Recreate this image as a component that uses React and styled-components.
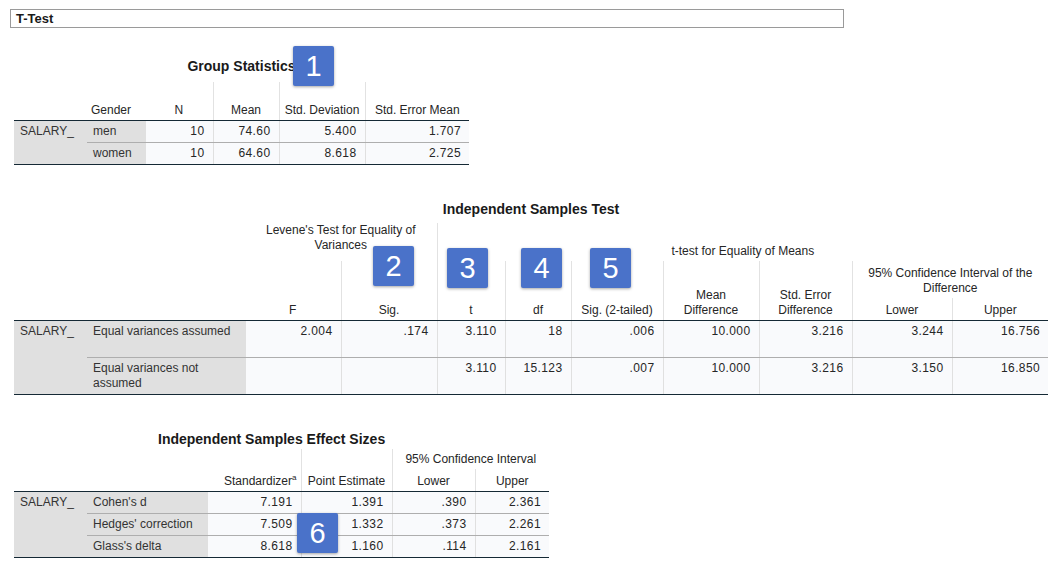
import React from "react";
import styled, { createGlobalStyle } from "styled-components";

const Global = createGlobalStyle`
  body { margin: 0; background: #fff; font-family: "Liberation Sans", Arial, sans-serif; color: #1a1a1a; }
`;

const Page = styled.div`
  position: relative;
  width: 1048px;
  height: 565px;
  padding: 9px 0 0 0;
  box-sizing: border-box;
`;

const Heading = styled.div`
  margin-left: 10px;
  width: 827px;
  height: 17px;
  border: 1px solid #9a9a9a;
  font-weight: bold;
  font-size: 13px;
  line-height: 17px;
  padding-left: 5px;
  box-sizing: content-box;
`;

const Block = styled.div`
  margin-left: 14px;
  margin-top: ${(p) => p.$top}px;
  width: ${(p) => p.$w}px;
`;

const Title = styled.div`
  text-align: center;
  font-weight: bold;
  font-size: 14px;
  height: 16px;
  line-height: 16px;
  margin-bottom: ${(p) => p.$gap}px;
  padding-left: ${(p) => p.$shift || 0}px;
`;

const Table = styled.table`
  border-collapse: collapse;
  table-layout: fixed;
  width: 100%;
  font-size: 12px;
  color: #262626;
`;

const Th = styled.th`
  font-weight: normal;
  text-align: center;
  vertical-align: bottom;
  padding: 0 4px 2px;
  line-height: 15px;
  height: ${(p) => p.$h || "auto"};
  border-left: ${(p) => (p.$noLine ? "none" : "1px solid #e2e2e2")};
  border-bottom: ${(p) => (p.$last ? "1px solid #152935" : "none")};
  text-align: ${(p) => p.$align || "center"};
  white-space: ${(p) => (p.$nowrap ? "nowrap" : "normal")};
  vertical-align: ${(p) => p.$valign || "bottom"};
`;

const Label = styled.td`
  background: #e0e0e0;
  padding: 3px 6px;
  vertical-align: top;
  line-height: 15px;
  border-bottom: 1px solid #152935;
  border-top: 1px solid #152935;
  color: #333;
`;

const Sub = styled.td`
  background: #e0e0e0;
  padding: 3px 6px;
  vertical-align: top;
  line-height: 15px;
  height: ${(p) => p.$h}px;
  border-top: 1px solid ${(p) => (p.$first ? "#152935" : "#aeaeae")};
  border-bottom: 1px solid ${(p) => (p.$lastRow ? "#152935" : "#aeaeae")};
  color: #333;
`;

const Num = styled.td`
  background: #f9fafc;
  text-align: right;
  padding: 3px 8px;
  vertical-align: top;
  line-height: 15px;
  letter-spacing: 0.4px;
  border-left: 1px solid #e0e0e0;
  border-top: 1px solid ${(p) => (p.$first ? "#152935" : "#aeaeae")};
  border-bottom: 1px solid ${(p) => (p.$lastRow ? "#152935" : "#aeaeae")};
`;

const Badge = styled.div`
  position: absolute;
  left: ${(p) => p.$x}px;
  top: ${(p) => p.$y}px;
  width: 41px;
  height: 40px;
  background: #4a72c9;
  color: #fff;
  font-size: 29px;
  display: flex;
  align-items: center;
  justify-content: center;
  border-radius: 2px;
  box-shadow: 0 1px 3px rgba(0,0,0,0.35);
`;

const Sup = styled.sup`
  font-size: 8px;
`;

const groupRows = [
  ["men", "10", "74.60", "5.400", "1.707"],
  ["women", "10", "64.60", "8.618", "2.725"],
];

const indRows = [
  ["Equal variances assumed", "2.004", ".174", "3.110", "18", ".006", "10.000", "3.216", "3.244", "16.756"],
  ["Equal variances not assumed", "", "", "3.110", "15.123", ".007", "10.000", "3.216", "3.150", "16.850"],
];

const effRows = [
  ["Cohen's d", "7.191", "1.391", ".390", "2.361"],
  ["Hedges' correction", "7.509", "1.332", ".373", "2.261"],
  ["Glass's delta", "8.618", "1.160", ".114", "2.161"],
];

function Cols({ widths }) {
  return (
    <colgroup>
      {widths.map((w, i) => (
        <col key={i} style={{ width: w }} />
      ))}
    </colgroup>
  );
}

export default function App() {
  return (
    <>
      <Global />
      <Page>
        <Heading>T-Test</Heading>

        <Block $top={30} $w={455}>
          <Title $gap={8} $shift={0}>Group Statistics</Title>
          <Table>
            <Cols widths={[73, 58, 68, 66, 86, 104]} />
            <thead>
              <tr>
                <Th $noLine $last $h="36px" />
                <Th $noLine $last $align="left">Gender</Th>
                <Th $noLine $last>N</Th>
                <Th $last>Mean</Th>
                <Th $last>Std. Deviation</Th>
                <Th $last>Std. Error Mean</Th>
              </tr>
            </thead>
            <tbody>
              {groupRows.map((r, i) => (
                <tr key={i}>
                  {i === 0 && <Label rowSpan={2}>SALARY_</Label>}
                  <Sub $h={15} $first={i === 0} $lastRow={i === 1}>{r[0]}</Sub>
                  {r.slice(1).map((v, j) => (
                    <Num key={j} $first={i === 0} $lastRow={i === 1}>{v}</Num>
                  ))}
                </tr>
              ))}
            </tbody>
          </Table>
        </Block>

        <Block $top={36} $w={1034}>
          <Title $gap={6}>Independent Samples Test</Title>
          <Table>
            <Cols widths={[73, 158, 96, 96, 68, 66, 92, 96, 93, 100, 96]} />
            <thead>
              <tr>
                <Th $noLine $last colSpan={2} rowSpan={3} />
                <Th $noLine colSpan={2} $h="36px" $valign="top">Levene's Test for Equality of Variances</Th>
                <Th colSpan={7} $valign="bottom">t-test for Equality of Means</Th>
              </tr>
              <tr>
                <Th $noLine $last rowSpan={2}>F</Th>
                <Th $last rowSpan={2}>Sig.</Th>
                <Th $last rowSpan={2}>t</Th>
                <Th $last rowSpan={2}>df</Th>
                <Th $last rowSpan={2}>Sig. (2-tailed)</Th>
                <Th $last rowSpan={2}>Mean Difference</Th>
                <Th $last rowSpan={2}>Std. Error Difference</Th>
                <Th colSpan={2} $h="35px">95% Confidence Interval of the Difference</Th>
              </tr>
              <tr>
                <Th $last $h="20px">Lower</Th>
                <Th $last>Upper</Th>
              </tr>
            </thead>
            <tbody>
              {indRows.map((r, i) => (
                <tr key={i}>
                  {i === 0 && <Label rowSpan={2}>SALARY_</Label>}
                  <Sub $h={30} $first={i === 0} $lastRow={i === 1}>{r[0]}</Sub>
                  {r.slice(1).map((v, j) => (
                    <Num key={j} $first={i === 0} $lastRow={i === 1}>{v}</Num>
                  ))}
                </tr>
              ))}
            </tbody>
          </Table>
        </Block>

        <Block $top={36} $w={535}>
          <Title $gap={2} style={{ textAlign: "left", paddingLeft: 144 }}>Independent Samples Effect Sizes</Title>
          <Table>
            <Cols widths={[73, 120, 94, 91, 83, 74]} />
            <thead>
              <tr>
                <Th $noLine $last colSpan={2} rowSpan={2} />
                <Th $noLine $last rowSpan={2} $align="right">Standardizer<Sup>a</Sup></Th>
                <Th $last rowSpan={2}>Point Estimate</Th>
                <Th colSpan={2} $h="18px">95% Confidence Interval</Th>
              </tr>
              <tr>
                <Th $last $h="20px">Lower</Th>
                <Th $last>Upper</Th>
              </tr>
            </thead>
            <tbody>
              {effRows.map((r, i) => (
                <tr key={i}>
                  {i === 0 && <Label rowSpan={3}>SALARY_</Label>}
                  <Sub $h={15} $first={i === 0} $lastRow={i === 2}>{r[0]}</Sub>
                  {r.slice(1).map((v, j) => (
                    <Num key={j} $first={i === 0} $lastRow={i === 2}>{v}</Num>
                  ))}
                </tr>
              ))}
            </tbody>
          </Table>
        </Block>

        <Badge $x={293} $y={46}>1</Badge>
        <Badge $x={373} $y={246}>2</Badge>
        <Badge $x={447} $y={248}>3</Badge>
        <Badge $x={521} $y={248}>4</Badge>
        <Badge $x={590} $y={248}>5</Badge>
        <Badge $x={297} $y={513}>6</Badge>
      </Page>
    </>
  );
}
